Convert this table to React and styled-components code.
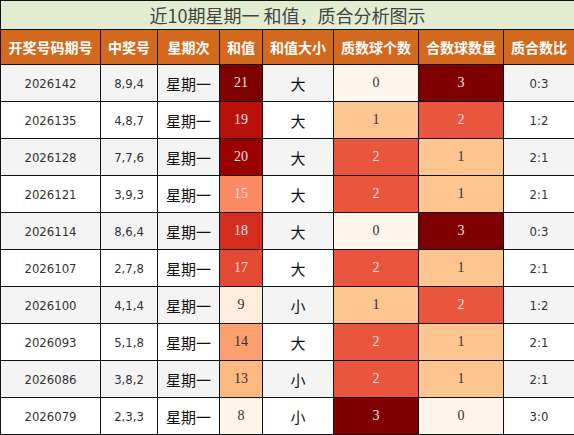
import React from 'react';
import styled, { createGlobalStyle } from 'styled-components';

const GlobalStyle = createGlobalStyle`
  body {
    margin: 0;
    background: #ffffff;
  }
`;

const Table = styled.table`
  width: 574px;
  height: 435px;
  border-collapse: collapse;
  table-layout: fixed;
  font-family: "DejaVu Sans Condensed", "DejaVu Sans", "Noto Sans CJK SC", sans-serif;
  color: #222;
`;

const TitleCell = styled.th`
  height: 28px;
  padding: 0;
  background: #e2ecd0;
  border: 1px solid #111;
  color: #444;
  font-family: "Noto Sans CJK SC", sans-serif;
  font-weight: 400;
  font-size: 18px;
  line-height: 26px;
`;

const HeadCell = styled.th`
  height: 34px;
  padding: 0;
  background: #d2691e;
  border: 1px solid #111;
  color: #fff;
  font-family: "Noto Sans CJK SC", sans-serif;
  font-weight: 700;
  font-size: 14px;
  white-space: nowrap;
`;

const Row = styled.tr`
  background: ${p => (p.odd ? '#f4f4f4' : '#ffffff')};
`;

const Cell = styled.td`
  padding: 0;
  border: 1px solid #111;
  text-align: center;
  font-size: 13px;
  color: #333;
`;

const CjkCell = styled(Cell)`
  font-family: "Noto Sans CJK SC", sans-serif;
  font-size: 15px;
  color: #111;
`;

const HeatCell = styled(Cell)`
  background: ${p => p.bg};
  color: ${p => (p.dark ? '#f3e2e0' : '#333')};
  font-family: "Liberation Serif", serif;
  font-size: 14px;
`;

const widths = [100, 57, 62, 43, 71, 85, 85, 71];
const headers = ['开奖号码期号', '中奖号', '星期次', '和值', '和值大小', '质数球个数', '合数球数量', '质合数比'];

const sumColor = {
  21: ['#7f0000', true],
  19: ['#b9100c', true],
  20: ['#9b0000', true],
  15: ['#f98a62', true],
  18: ['#d52e20', true],
  17: ['#e44a33', true],
  9: ['#feeddc', false],
  14: ['#fca06f', false],
  13: ['#fdb982', false],
  8: ['#fff5eb', false],
};

const countColor = {
  0: ['#fff5eb', false],
  1: ['#fdc590', false],
  2: ['#e9553d', true],
  3: ['#7f0000', true],
};

const rows = [
  ['2026142', '8,9,4', 21, '大', 0, 3],
  ['2026135', '4,8,7', 19, '大', 1, 2],
  ['2026128', '7,7,6', 20, '大', 2, 1],
  ['2026121', '3,9,3', 15, '大', 2, 1],
  ['2026114', '8,6,4', 18, '大', 0, 3],
  ['2026107', '2,7,8', 17, '大', 2, 1],
  ['2026100', '4,1,4', 9, '小', 1, 2],
  ['2026093', '5,1,8', 14, '大', 2, 1],
  ['2026086', '3,8,2', 13, '小', 2, 1],
  ['2026079', '2,3,3', 8, '小', 3, 0],
];

export default function App() {
  return (
    <>
      <GlobalStyle />
      <Table>
        <colgroup>
          {widths.map((w, i) => (
            <col key={i} style={{ width: w }} />
          ))}
        </colgroup>
        <thead>
          <tr>
            <TitleCell colSpan={8}>近10期星期一 和值，质合分析图示</TitleCell>
          </tr>
          <tr>
            {headers.map(h => (
              <HeadCell key={h}>{h}</HeadCell>
            ))}
          </tr>
        </thead>
        <tbody>
          {rows.map(([issue, nums, sum, size, prime, comp], i) => (
            <Row key={issue} odd={i % 2 === 0}>
              <Cell>{issue}</Cell>
              <Cell>{nums}</Cell>
              <CjkCell>星期一</CjkCell>
              <HeatCell bg={sumColor[sum][0]} dark={sumColor[sum][1]}>{sum}</HeatCell>
              <CjkCell>{size}</CjkCell>
              <HeatCell bg={countColor[prime][0]} dark={countColor[prime][1]}>{prime}</HeatCell>
              <HeatCell bg={countColor[comp][0]} dark={countColor[comp][1]}>{comp}</HeatCell>
              <Cell>{prime}:{comp}</Cell>
            </Row>
          ))}
        </tbody>
      </Table>
    </>
  );
}
